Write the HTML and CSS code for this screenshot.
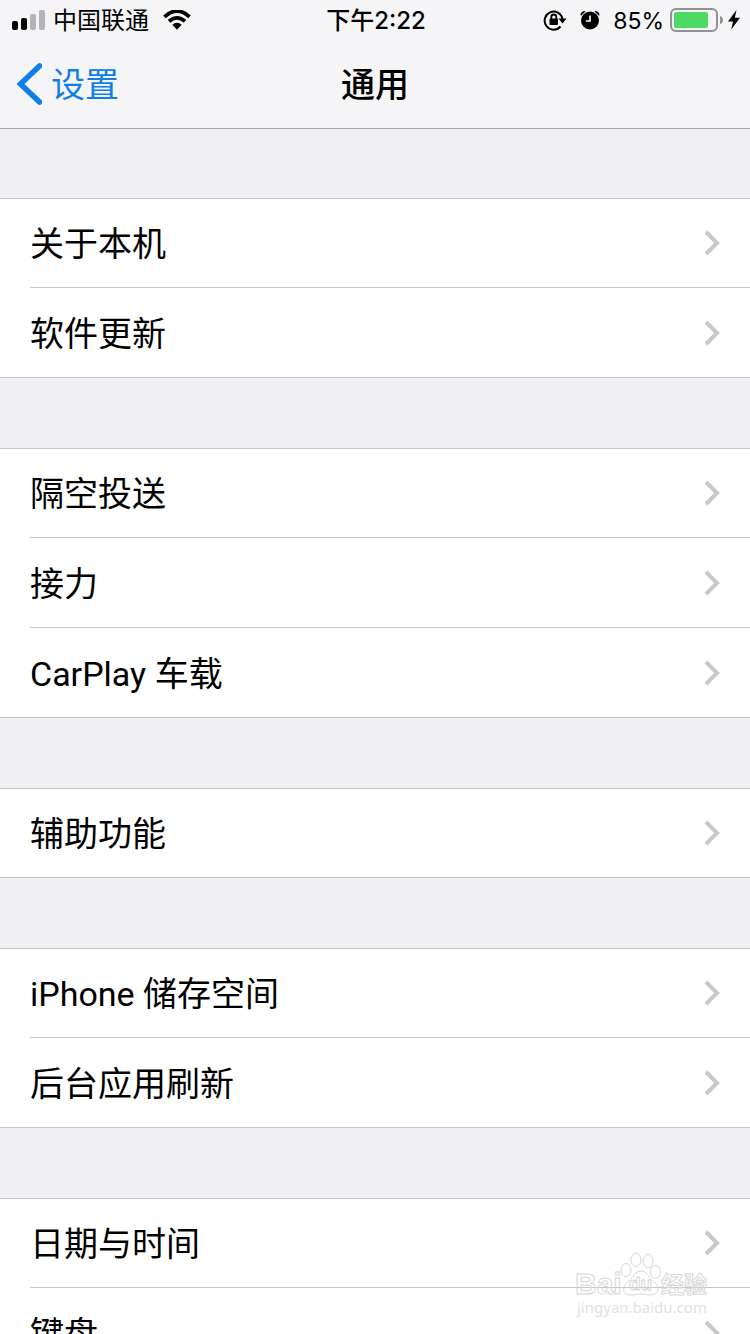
FILE: index.html
```html
<!DOCTYPE html>
<html lang="zh-CN">
<head>
<meta charset="utf-8">
<meta name="viewport" content="width=device-width">
<title>通用</title>
<link rel="stylesheet" href="styles.css">
</head>
<body>
<svg class="defs" aria-hidden="true">
  <symbol id="chevron" viewBox="0 0 18 28"><path d="M3 3 14 14 3 25" fill="none" stroke="#c7c7cc" stroke-width="4"/></symbol>
</svg>
<div class="screen">
  <header class="top">
    <div class="status">
      <div class="status-side">
        <svg class="signal" width="34" height="20" viewBox="0 0 34 20" aria-label="信号">
          <rect x="0" y="11" width="6" height="9" rx="2"/><rect x="9" y="8" width="6" height="12" rx="2"/>
          <rect x="18" y="4" width="6" height="16" rx="2" fill="#b4b4b6"/><rect x="27" y="0" width="6" height="20" rx="2" fill="#b4b4b6"/>
        </svg>
        <span class="carrier">中国联通</span>
        <svg width="28" height="20" viewBox="0 0 28 20" aria-label="无线网络">
          <path d="M1.500 6.800Q14-4.600 26.500 6.800M6 11.300Q14 4.500 22 11.300" fill="none" stroke="#000" stroke-width="3.800"/>
          <path d="M9.300 14.800Q14 10.800 18.700 14.800L14 19.700Z"/>
        </svg>
      </div>
      <time class="clock">下午2:22</time>
      <div class="status-side status-right">
        <svg width="24" height="22" viewBox="0 0 24 22" aria-label="方向锁定">
          <path d="M17.500 17.500A9 9 0 1 1 19.500 10" fill="none" stroke="#000" stroke-width="2"/>
          <path d="M15.500 9.500H23.500L19.500 14.500Z"/>
          <rect x="6.500" y="9.500" width="8.500" height="6.500" rx="1"/><path d="M8.300 10V8a2.500 2.500 0 0 1 5 0v2" fill="none" stroke="#000" stroke-width="1.800"/>
        </svg>
        <svg class="alarm" width="20" height="20" viewBox="0 0 20 20" aria-label="闹钟">
          <circle cx="10" cy="10.500" r="9"/>
          <path d="M.5 5.500Q.5 1 5.500 1L4.500 2.500Q2.500 3.500 1.500 5.500ZM19.500 5.500Q19.500 1 14.500 1L15.500 2.500Q17.500 3.500 18.500 5.500Z"/>
          <path d="M10 5.500V11H6" fill="none" stroke="#fff" stroke-width="1.600"/>
        </svg>
        <span class="percent">85%</span>
        <svg width="54" height="24" viewBox="0 0 54 24" aria-label="电池">
          <rect x="1" y="1" width="46" height="22" rx="5" fill="none" stroke="#919193" stroke-width="2"/>
          <rect x="4" y="4" width="34" height="16" rx="2" fill="#4cd964"/>
          <path d="M50 8q3 1 3 4t-3 4Z" fill="#919193"/>
        </svg>
        <svg class="bolt" width="12" height="20" viewBox="0 0 12 20" aria-label="充电中"><path d="M8.500 0 0 11.500H5L3.200 19.500 12 7.700H6.800Z"/></svg>
      </div>
    </div>
    <nav class="nav">
      <a class="back" href="#"><svg width="26" height="42" viewBox="0 0 26 42" aria-hidden="true"><path d="M23.500 3 4.500 21 23.500 39" fill="none" stroke="#107ee9" stroke-width="5.500" stroke-linecap="round"/></svg><span class="label">设置</span></a>
      <h1 class="title label">通用</h1>
    </nav>
  </header>
  <main class="list">
    <section class="group">
      <a class="row" href="#"><span class="label">关于本机</span><svg class="chevron"><use href="#chevron"/></svg></a>
      <a class="row" href="#"><span class="label">软件更新</span><svg class="chevron"><use href="#chevron"/></svg></a>
    </section>
    <section class="group">
      <a class="row" href="#"><span class="label">隔空投送</span><svg class="chevron"><use href="#chevron"/></svg></a>
      <a class="row" href="#"><span class="label">接力</span><svg class="chevron"><use href="#chevron"/></svg></a>
      <a class="row" href="#"><span class="label">CarPlay 车载</span><svg class="chevron"><use href="#chevron"/></svg></a>
    </section>
    <section class="group">
      <a class="row" href="#"><span class="label">辅助功能</span><svg class="chevron"><use href="#chevron"/></svg></a>
    </section>
    <section class="group">
      <a class="row" href="#"><span class="label">iPhone 储存空间</span><svg class="chevron"><use href="#chevron"/></svg></a>
      <a class="row" href="#"><span class="label">后台应用刷新</span><svg class="chevron"><use href="#chevron"/></svg></a>
    </section>
    <section class="group">
      <a class="row" href="#"><span class="label">日期与时间</span><svg class="chevron"><use href="#chevron"/></svg></a>
      <a class="row" href="#"><span class="label">键盘</span><svg class="chevron"><use href="#chevron"/></svg></a>
    </section>
  </main>
  <svg class="watermark" width="140" height="68" viewBox="0 0 140 68">
    <text class="mark mark-latin" x="0" y="43">Bai</text>
    <text class="mark mark-cjk" x="86" y="42">经验</text>
    <g class="mark">
      <ellipse cx="51" cy="19" rx="5" ry="6.500"/><ellipse cx="61" cy="9" rx="5" ry="6.800"/><ellipse cx="73" cy="10" rx="5" ry="6.800"/><ellipse cx="80.500" cy="21" rx="5" ry="6.500"/>
      <path d="M66 20C60 20 59 26 54 30C46 35 47 44 56 44C61 44 62 43 66 43S71 44 75 44C85 44 85 35 78 30C73 26 72 20 66 20Z"/>
    </g>
    <text class="mark mark-du" x="54" y="39">du</text>
    <text class="mark-url" x="2" y="62">jingyan.baidu.com</text>
  </svg>
</div>
</body>
</html>
```
FILE: styles.css
```css
* { box-sizing: border-box; }
body {
  margin: 0;
  background: #efeff4;
  color: #000;
  font-family: Roboto, "Noto Sans CJK SC", sans-serif;
}
a { color: inherit; text-decoration: none; }
svg { flex: none; display: block; }
.defs { position: absolute; width: 0; height: 0; }
.screen {
  position: relative;
  display: flex;
  flex-direction: column;
  height: 100vh;
  overflow: hidden;
}
.top { flex: none; background: #f5f5f7; border-bottom: 1px solid #a7a7ab; }
.status {
  display: grid;
  grid-template-columns: 1fr auto 1fr;
  align-items: center;
  height: 40px;
  padding: 0 10px 0 12px;
  font-family: Inter, "Noto Sans CJK SC", sans-serif;
  font-size: 24px;
  line-height: 40px;
}
.status-side { display: flex; align-items: center; }
.carrier { margin: 0 14px 0 7px; }
.carrier, .clock, .percent { padding-top: 2px; line-height: 38px; }
.clock { font-weight: 500; }
.status-right { justify-content: flex-end; }
.alarm { margin: 0 13px; }
.percent { margin-right: 6px; font-size: 23px; }
.bolt { margin-left: 4px; }
.nav {
  display: grid;
  grid-template-columns: 1fr auto 1fr;
  align-items: center;
  height: 88px;
  padding: 0 16px;
  font-size: 34px;
}
.back { display: flex; align-items: center; gap: 9px; color: #107ee9; }
.title { margin: 0; font-size: 34px; font-weight: 500; }
.label { padding-top: 2px; line-height: 48px; }
.list { flex: 1; min-height: 0; overflow: hidden; padding-top: 69px; }
.group {
  margin-bottom: 70px;
  background: #fff;
  box-shadow: inset 0 1px #c8c7cc, inset 0 -1px #c8c7cc;
}
.row {
  display: flex;
  align-items: center;
  justify-content: space-between;
  height: 90px;
  margin-left: 30px;
  padding-right: 29px;
  border-bottom: 1px solid #c8c7cc;
  font-size: 34px;
}
.chevron { width: 18px; height: 28px; }
.watermark { position: absolute; right: 35px; bottom: 15px; overflow: visible; }
.mark { fill: none; stroke: #d8d8d8; stroke-width: 1px; }
.mark-latin { font: bold 30px "Liberation Sans", sans-serif; }
.mark-du { font: bold 19px "Liberation Sans", sans-serif; }
.mark-cjk { font: bold 23px "Noto Sans CJK SC", sans-serif; }
.mark-url { fill: #e2e2e2; font: 15px "Noto Sans", sans-serif; }
```
